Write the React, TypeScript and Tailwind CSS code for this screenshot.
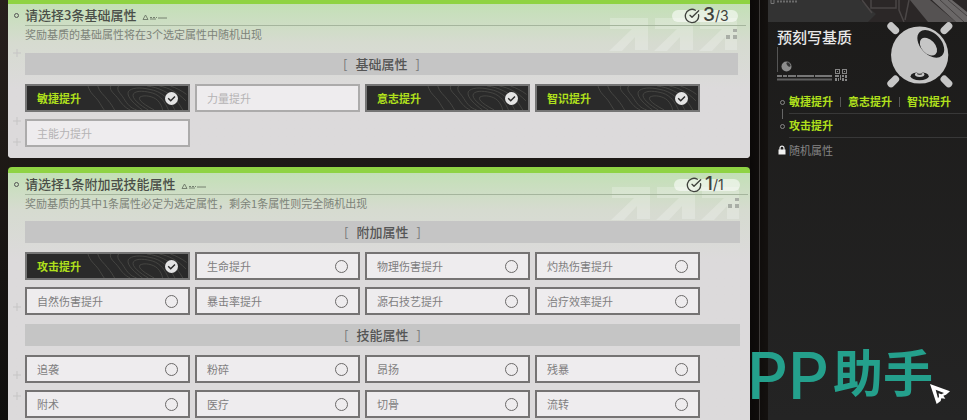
import React, { useState } from 'react';
import { CircleCheckBig } from 'lucide-react';

type Attribute = {
  name: string;
  disabled?: boolean;
};

const baseAttributes: Attribute[] = [
  { name: '敏捷提升' },
  { name: '力量提升' },
  { name: '意志提升' },
  { name: '智识提升' },
  { name: '主能力提升' }
];

const extraAttributes: Attribute[] = [
  { name: '攻击提升' },
  { name: '生命提升' },
  { name: '物理伤害提升' },
  { name: '灼热伤害提升' },
  { name: '自然伤害提升' },
  { name: '暴击率提升' },
  { name: '源石技艺提升' },
  { name: '治疗效率提升' }
];

const skillAttributes: Attribute[] = [
  { name: '追袭' },
  { name: '粉碎' },
  { name: '昂扬' },
  { name: '残暴' },
  { name: '附术' },
  { name: '医疗' },
  { name: '切骨' },
  { name: '流转' }
];

const MAX_BASE = 3;

// Contour lines behind a selected option
const Contours = () => (
  <svg viewBox="0 0 306 74" className="absolute right-0 top-0 h-6 w-[102px]" fill="none" stroke="#4b4b48" strokeWidth="2.5">
    <path d="M2 0 C8 22 22 30 34 46 C42 58 46 66 52 74" />
    <path d="M32 0 C36 18 52 28 62 42 C74 56 78 64 84 74" />
    <path d="M72 0 C66 14 86 26 96 40 C108 58 116 66 132 74" />
    <path d="M96 0 C88 14 104 24 112 38 C124 58 134 68 152 74" />
    <path d="M170 74 C148 58 120 34 126 18 C134 4 166 4 190 10 C230 16 252 40 270 74" />
    <path d="M188 74 C164 60 134 38 142 24 C152 12 180 16 202 22 C226 30 240 50 250 74" />
    <path d="M206 74 C180 60 154 44 162 34 C176 26 204 32 216 44 C226 54 230 64 232 74" />
    <path d="M184 0 C220 4 256 22 276 46 C284 58 290 66 294 74" />
    <path d="M222 0 C252 6 276 18 304 46" />
    <path d="M256 0 C274 6 290 14 306 26" />
  </svg>
);

type OptionProps = {
  attribute: Attribute;
  type: 'checkbox' | 'radio';
  group: string;
  checked: boolean;
  onChange: () => void;
};

const Option = ({ attribute, type, group, checked, onChange }: OptionProps) => {
  let look = 'border-[#757373] bg-[#eeecee] text-[#807e7f]';
  if (checked) look = 'border-[#757575] bg-[#2a2a2a] text-[#b0e01c] font-bold';
  if (attribute.disabled) look = 'border-[#acabab] bg-[#eeecee] text-[#b5b3b4]';

  return (
    <label className={`relative flex h-7 items-center justify-between overflow-hidden border-2 px-[10px] text-[11px] ${look}`}>
      {checked && <Contours />}
      <span className="relative">{attribute.name}</span>
      <span className="relative grid place-items-center">
        <input
          type={type}
          name={group}
          checked={checked}
          disabled={attribute.disabled}
          onChange={onChange}
          className="col-start-1 row-start-1 h-[13px] w-[13px] appearance-none rounded-full border border-[#6b6969] checked:border-0 checked:bg-[#e4e4e4] disabled:opacity-0"
        />
        {checked && (
          <svg viewBox="0 0 13 13" className="pointer-events-none col-start-1 row-start-1 h-[13px] w-[13px]" fill="none" stroke="#2a2a2a" strokeWidth="1.4">
            <path d="M3.2 6.3 L5.7 8.8 L10 4.4" />
          </svg>
        )}
      </span>
    </label>
  );
};

const GroupTitle = ({ children }: { children: React.ReactNode }) => (
  <h3 className="flex h-[22px] items-center justify-center gap-2 bg-[#c5c5c5] text-[13px] font-medium text-[#555]">
    <span className="font-normal text-[#777]">[</span>
    {children}
    <span className="font-normal text-[#777]">]</span>
  </h3>
);

type HeaderProps = {
  title: string;
  description: string;
  count: number;
  total: number;
};

const PanelHeader = ({ title, description, count, total }: HeaderProps) => (
  <div className="relative">
    {/* Faded arrows and dots */}
    <svg viewBox="0 0 130 35" className="absolute right-0 top-[13px] h-[35px] w-[130px]" fill="#fff">
      <g opacity="0.22">
        <path d="M2 1 H40 V33 H27 V20 L14 34 H1 L24 12 H2 Z" />
        <path d="M47 1 H85 V33 H72 V20 L59 34 H46 L69 12 H47 Z" />
        <path d="M92 1 H129 V33 H117 V20 L104 34 H91 L114 12 H92 Z" />
      </g>
      <path d="M125 12 h4 v3 h-4z M118 18 h4 v4 h-4z M125 18 h4 v4 h-4z" fill="#a9aea6" />
    </svg>
    <div className="relative -mr-2 flex h-[22px] items-center border-b border-[#a5b59d] pr-2">
      <span className="absolute -left-[11px] top-[9px] h-[5px] w-[5px] rounded-full border border-[#555]"></span>
      <h2 className="text-[13px] font-medium text-[#4a4e48]">{title}</h2>
      <svg viewBox="0 0 26 8" className="ml-[6px] mt-1 h-2 w-[26px]" fill="none" stroke="#6b7767" strokeWidth="0.9">
        <path d="M1 6.5 L3.5 2 L6 6.5 Z" />
        <path d="M8 4.5 H15" strokeDasharray="2 1" />
        <path d="M8 6 H14 M16 5 H25" />
      </svg>
      <div className="ml-auto mt-[2px] flex h-3 w-[66px] items-center rounded-full bg-white/55 pl-3 text-[#3f423d]">
        <CircleCheckBig className="h-4 w-4 shrink-0" strokeWidth={2} />
        <p className="ml-[3px] whitespace-nowrap font-[Inter,sans-serif] text-[14px] leading-5">
          <span className="text-[19px] font-medium">{count}</span>/{total}
        </p>
      </div>
    </div>
    <p className="relative h-[17px] text-[11px] leading-[17px] text-[#7d8379]">{description}</p>
  </div>
);

const Plus = ({ className }: { className: string }) => (
  <svg viewBox="0 0 8 8" className={`absolute left-[5px] h-2 w-2 ${className}`} stroke="#c6c5c5">
    <path d="M4 0 V8 M0 4 H8" />
  </svg>
);

const EssenceIcon = () => (
  <svg viewBox="84 38 196 196" className="h-[66px] w-[66px]" fill="#c6c6c6">
    <g stroke="#c6c6c6" strokeWidth="22" strokeLinecap="round">
      <path d="M96 50 L109 63 M267 50 L254 63 M96 221 L109 208 M267 221 L254 208" />
    </g>
    <circle cx="181" cy="136" r="85" />
    <ellipse cx="214" cy="103" rx="31" ry="48" transform="rotate(-43 214 103)" fill="#1f1f1f" />
    <ellipse cx="207" cy="111" rx="20" ry="31" transform="rotate(-43 207 111)" />
    <ellipse cx="181" cy="199" rx="27" ry="12" fill="#1f1f1f" />
    <ellipse cx="181" cy="194" rx="14" ry="7" />
    <ellipse cx="181" cy="192" rx="8" ry="3" fill="#1f1f1f" />
    <ellipse cx="181" cy="189" rx="8" ry="3" />
  </svg>
);

const SidebarMark = () => (
  <svg viewBox="0 0 72 35" className="h-[35px] w-[72px]" fill="#777">
    <path d="M0 0 H1 V25 H0 Z" fill="#555" />
    <circle cx="9.5" cy="19.5" r="5" fill="#8d8d8d" />
    <ellipse cx="11.5" cy="17.5" rx="1.5" ry="2.6" transform="rotate(-43 11.5 17.5)" fill="#333" />
    <path d="M0 28 h5 v2 h-5z M6 28 h4 v2 h-4z M11 28 h8 v2 h-8z M20 28 h17 v2 h-17z M38 28 h17 v2 h-17z" />
    <path d="M0 31.5 h55 v2 h-55z" fill="#606060" />
    <path
      d="M58 22 h5 v1 h-5z M58 22 h1 v5 h-1z M62 22 h1 v5 h-1z M58 26 h5 v1 h-5z M60 24 h1 v1 h-1z M65 22 h5 v1 h-5z M65 22 h1 v5 h-1z M69 22 h1 v5 h-1z M65 26 h5 v1 h-5z M67 24 h1 v1 h-1z M58 28 h4 v2 h-4z M63 28 h1 v5 h-1z M58 31 h2 v3 h-2z M61 31 h1 v3 h-1z M65 28 h2 v2 h-2z M68 28 h2 v3 h-2z M65 31 h2 v3 h-2z M68 32 h2 v2 h-2z"
      fill="#858585"
    />
  </svg>
);

// Strip of machinery cut off by the top of the window
const Scene = () => (
  <svg viewBox="0 0 199 22" preserveAspectRatio="xMinYMin slice" className="h-[22px] w-full" fill="none">
    <path d="M0 0 H199 V22 H0 Z" fill="#333" />
    <path d="M92 0 L108 14 L100 22 H199 V0 Z" fill="#2b2727" />
    <path d="M103 0 V8 H128 V0 M94 0 L104 13 M131 0 V10 L136 22 M141 0 L137 20" stroke="#4a4646" strokeWidth="1.5" />
    <path d="M142 0 L160 22 H188 L162 0 Z" fill="#555252" />
    <path d="M164 0 L188 22 H199 V12 L184 0 Z" fill="#6a6767" />
    <path d="M172 0 L196 22 M180 0 L199 16" stroke="#454242" />
    <path d="M3 0 V3.5 H6 V0" stroke="#777" />
    <path d="M9 1.5 H29" stroke="#6c6c6c" strokeWidth="2" strokeDasharray="2 1" />
  </svg>
);

const App = () => {
  const [base, setBase] = useState(['敏捷提升', '意志提升', '智识提升']);
  const [extra, setExtra] = useState('攻击提升');

  const toggleBase = (name: string) => {
    setBase(base.includes(name) ? base.filter((item) => item !== name) : [...base, name]);
  };

  return (
    <div className="flex min-h-screen bg-[#14110f] font-['Noto_Sans_CJK_SC',sans-serif]">
      <main className="flex min-w-0 flex-1 flex-col gap-[9px] bg-linear-to-b from-[#27201c] to-[#0f0e0d] pl-2">
        {/* Base attributes */}
        <section className="relative rounded-b-sm border-t-4 border-[#8fd343] bg-[#dcdadb] bg-linear-to-b from-[#c3e0b6] via-[#d6dbd0] via-25% to-[#dcdadb] to-55% pb-[11px] pl-[17px] pr-3">
          <Plus className="top-[45px]" />
          <Plus className="top-[113px]" />
          <Plus className="top-[134px]" />
          <PanelHeader
            title="请选择3条基础属性"
            description="奖励基质的基础属性将在3个选定属性中随机出现"
            count={base.length}
            total={MAX_BASE}
          />
          <div className="mt-[10px]">
            <GroupTitle>基础属性</GroupTitle>
          </div>
          <div className="mr-[38px] mt-[9px] grid grid-cols-4 gap-x-[5px] gap-y-[7px]">
            {baseAttributes.map((attribute) => (
              <Option
                key={attribute.name}
                attribute={{ ...attribute, disabled: base.length >= MAX_BASE && !base.includes(attribute.name) }}
                type="checkbox"
                group="base"
                checked={base.includes(attribute.name)}
                onChange={() => toggleBase(attribute.name)}
              />
            ))}
          </div>
        </section>

        {/* Extra and skill attributes */}
        <section className="relative flex-1 rounded-t-sm border-t-[6px] border-[#8fd343] bg-[#dcdadb] bg-linear-to-b from-[#c3e0b6] via-[#d6dbd0] via-15% to-[#dcdadb] to-35% pl-[17px] pr-[10px]">
          <Plus className="top-[130px]" />
          <Plus className="top-[198px]" />
          <Plus className="top-[219px]" />
          <PanelHeader
            title="请选择1条附加或技能属性"
            description="奖励基质的其中1条属性必定为选定属性，剩余1条属性则完全随机出现"
            count={1}
            total={1}
          />
          {[
            { title: '附加属性', items: extraAttributes },
            { title: '技能属性', items: skillAttributes }
          ].map((group) => (
            <div key={group.title} className="mt-[9px]">
              <GroupTitle>{group.title}</GroupTitle>
              <div className="mr-10 mt-[9px] grid grid-cols-4 gap-x-[5px] gap-y-[7px]">
                {group.items.map((attribute) => (
                  <Option
                    key={attribute.name}
                    attribute={attribute}
                    type="radio"
                    group="extra"
                    checked={extra === attribute.name}
                    onChange={() => setExtra(attribute.name)}
                  />
                ))}
              </div>
            </div>
          ))}
        </section>
      </main>

      {/* Divider */}
      <div className="flex w-[18px] shrink-0 justify-center bg-linear-to-r from-[#0b0908] to-[#14110f]">
        <div className="w-px bg-[#3d3a38]"></div>
      </div>

      <aside className="relative w-[199px] shrink-0 bg-linear-to-b from-[#1c1b1a] to-[#242424]">
        <Scene />
        <div className="flex justify-between pl-[9px] pr-[14px]">
          <div className="pt-[5px]">
            <h2 className="text-[15px] font-medium leading-5 text-[#e8e8e8]">预刻写基质</h2>
            <SidebarMark />
          </div>
          <EssenceIcon />
        </div>
        <ul className="mt-[2px] pl-[9px] text-[11px] font-bold text-[#b0e01c]">
          <li className="relative flex h-6 items-center gap-[2px]">
            <span className="flex w-[10px] justify-center">
              <span className="h-[5px] w-[5px] rounded-full border border-[#888]"></span>
            </span>
            <span className="absolute left-[5px] top-[19px] h-[10px] w-px bg-[#666]"></span>
            <span className="flex h-full flex-1 items-center gap-[7px] whitespace-nowrap border-b border-[#383838]">
              {base.map((name, index) => (
                <React.Fragment key={name}>
                  {index > 0 && <span className="h-[10px] w-px bg-[#555]"></span>}
                  <span>{name}</span>
                </React.Fragment>
              ))}
            </span>
          </li>
          <li className="flex h-6 items-center gap-[2px]">
            <span className="flex w-[10px] justify-center">
              <span className="h-[5px] w-[5px] rounded-full border border-[#888]"></span>
            </span>
            <span className="flex h-full flex-1 items-center border-b border-[#383838]">{extra}</span>
          </li>
          <li className="flex h-6 items-center gap-[2px] font-normal text-[#858585]">
            <svg viewBox="0 0 10 10" className="h-[10px] w-[10px]" fill="#f2f2f2">
              <path d="M1.5 4.5 H8.5 V9.5 H1.5 Z" />
              <path d="M3 5 V3.2 A2 2 0 0 1 7 3.2 V5" fill="none" stroke="#f2f2f2" strokeWidth="1.2" />
            </svg>
            <span>随机属性</span>
          </li>
        </ul>

        {/* Watermark and cursor */}
        <p className="pointer-events-none absolute right-[34px] top-[334px] flex items-center gap-1 whitespace-nowrap leading-[72px] text-[#24a08c]">
          <span className="font-[Inter,sans-serif] text-[64px] font-medium">PP</span>
          <span className="pb-3 text-[50px] font-bold">助手</span>
        </p>
        <svg viewBox="0 0 60 60" className="absolute right-[17px] top-[384px] h-5 w-5" fill="#fff">
          <path d="M0 0 L60 22 L48 32 L40 35 L46 44 L34 43 L32 51 L20 60 Z" />
          <path d="M17 17 L42 27 L34 31 L26 28 L27 38 L24 43 Z" fill="#222" />
        </svg>
      </aside>
    </div>
  );
};

export default App;
